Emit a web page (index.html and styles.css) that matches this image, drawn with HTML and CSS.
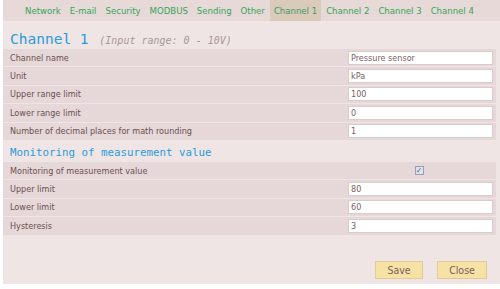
FILE: index.html
```html
<!DOCTYPE html>
<html lang="en">
<head>
  <meta charset="UTF-8">
  <meta name="viewport" content="width=device-width, initial-scale=1.0">
  <title>Channel 1</title>
  <link rel="stylesheet" href="styles.css">
</head>
<body>
  <div class="panel">
    <ul class="tabs">
      <li class="tab">Network</li>
      <li class="tab">E-mail</li>
      <li class="tab">Security</li>
      <li class="tab">MODBUS</li>
      <li class="tab">Sending</li>
      <li class="tab">Other</li>
      <li class="tab active">Channel 1</li>
      <li class="tab">Channel 2</li>
      <li class="tab">Channel 3</li>
      <li class="tab">Channel 4</li>
    </ul>

    <h1 class="title">Channel 1 <span class="range">(Input range: 0 - 10V)</span></h1>
    <div class="rows">
      <div class="row"><span class="label">Channel name</span><input class="field" type="text" value="Pressure sensor"></div>
      <div class="row"><span class="label">Unit</span><input class="field" type="text" value="kPa"></div>
      <div class="row"><span class="label">Upper range limit</span><input class="field" type="text" value="100"></div>
      <div class="row"><span class="label">Lower range limit</span><input class="field" type="text" value="0"></div>
      <div class="row"><span class="label">Number of decimal places for math rounding</span><input class="field" type="text" value="1"></div>
    </div>

    <h2 class="subtitle">Monitoring of measurement value</h2>
    <div class="rows">
      <div class="row"><span class="label">Monitoring of measurement value</span><span class="check-cell"><span class="check">&#10003;</span></span></div>
      <div class="row"><span class="label">Upper limit</span><input class="field" type="text" value="80"></div>
      <div class="row"><span class="label">Lower limit</span><input class="field" type="text" value="60"></div>
      <div class="row"><span class="label">Hysteresis</span><input class="field" type="text" value="3"></div>
    </div>

    <div class="buttons">
      <button class="btn">Save</button>
      <button class="btn">Close</button>
    </div>
  </div>
</body>
</html>
```

FILE: styles.css
```css
* {
  margin: 0;
  padding: 0;
  box-sizing: border-box;
}

body {
  font-family: "DejaVu Sans Condensed", "Liberation Sans", Arial, sans-serif;
  font-size: 9px;
  background-color: #ffffff;
  color: #6a5050;
}

.panel {
  margin-left: 3px;
  width: 497px;
  height: 284px;
  background: #efe5e4;
}

.tabs {
  list-style: none;
  display: flex;
  gap: 1px;
  height: 21px;
  padding-left: 18px;
  background: #e6d9d8;
  white-space: nowrap;
  font-size: 9.5px;
}

.tab {
  padding: 0 4px;
  line-height: 21px;
  color: #35a55a;
}

.tab.active {
  background: #dacaba;
  color: #3c9a5c;
}

.title {
  font-family: "DejaVu Sans Mono", monospace;
  font-weight: normal;
  font-size: 14.5px;
  color: #2b9bdc;
  height: 28px;
  line-height: 20px;
  padding: 8px 0 0 7px;
}

.range {
  font-size: 10px;
  font-style: italic;
  color: #a89898;
  margin-left: 2px;
}

.rows {
  display: flex;
  flex-direction: column;
  gap: 1px;
  margin-right: 4px;
}

.row {
  display: flex;
  align-items: center;
  justify-content: space-between;
  height: 17.4px;
  background: #e6d8d8;
  padding: 0 3px 0 7px;
}

.field {
  width: 145px;
  height: 14px;
  border: 1px solid #d8cccc;
  background: #ffffff;
  font-family: inherit;
  font-size: 9px;
  color: #7a6060;
  padding: 0 2px;
  outline: none;
}

.check-cell {
  width: 145px;
  display: flex;
  justify-content: center;
  padding-right: 3px;
}

.check {
  width: 9px;
  height: 9px;
  border: 1px solid #9aa0b0;
  background: #dde2ec;
  color: #3f55a8;
  font-size: 8px;
  line-height: 7px;
  text-align: center;
  font-weight: bold;
}

.subtitle {
  font-family: "DejaVu Sans Mono", monospace;
  font-weight: normal;
  font-size: 10.8px;
  color: #2b9bdc;
  height: 22px;
  line-height: 14px;
  padding: 6px 0 0 7px;
}

.buttons {
  display: flex;
  justify-content: flex-end;
  gap: 14px;
  padding: 26px 13px 0 0;
}

.btn {
  height: 18px;
  width: 48px;
  background: #f7e2a6;
  border: 1px solid #e0cc96;
  font-family: inherit;
  font-size: 10.5px;
  color: #7a6060;
}

.btn + .btn {
  width: 50px;
}
```
